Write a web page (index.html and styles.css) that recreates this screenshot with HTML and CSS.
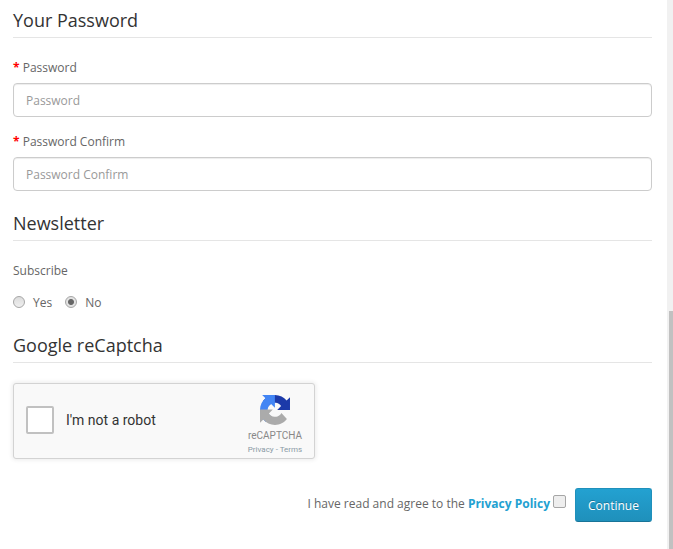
FILE: index.html
```html
<!DOCTYPE html>
<html lang="en">
<head>
    <meta charset="UTF-8">
    <title>Register</title>
    <link rel="stylesheet" href="styles.css">
</head>
<body>
    <div class="page">
        <form class="content">
            <fieldset class="group">
                <legend class="legend">Your Password</legend>
                <div class="field">
                    <label class="label"><span class="req">*</span> Password</label>
                    <input class="input" type="text" placeholder="Password">
                </div>
                <div class="field">
                    <label class="label"><span class="req">*</span> Password Confirm</label>
                    <input class="input" type="text" placeholder="Password Confirm">
                </div>
            </fieldset>
            <fieldset class="group">
                <legend class="legend">Newsletter</legend>
                <div class="label subscribe">Subscribe</div>
                <div class="radios">
                    <label class="radio"><span class="dot"></span>Yes</label>
                    <label class="radio"><span class="dot on"></span>No</label>
                </div>
            </fieldset>
            <fieldset class="group">
                <legend class="legend">Google reCaptcha</legend>
                <div class="captcha">
                    <span class="tick"></span>
                    <span class="robot">I'm not a robot</span>
                    <div class="brand">
                        <svg class="logo" width="30" height="30" viewBox="0 0 64 64">
                            <path fill="#1c3aa9" d="M64 31.955l-.033-1.37V4.687l-7.16 7.16C50.948 4.674 42.033.093 32.05.093c-10.4 0-19.622 4.96-25.458 12.64l11.736 11.86a15.55 15.55 0 0 1 4.754-5.334c2.05-1.6 4.952-2.906 8.968-2.906.485 0 .86.057 1.135.163 4.976.393 9.288 3.14 11.828 7.124l-8.307 8.307c10.522-.04 22.41-.066 27.295.005"/>
                            <path fill="#4285f4" d="M31.862.001l-1.37.033H4.594l7.16 7.16C4.58 13.05 0 21.967 0 31.95c0 10.4 4.96 19.622 12.64 25.458L24.5 45.672a15.55 15.55 0 0 1-5.334-4.754c-1.6-2.05-2.906-4.952-2.906-8.968 0-.485.057-.86.163-1.135.393-4.976 3.14-9.288 7.124-11.828l8.307 8.307c-.04-10.522-.066-22.41.005-27.295"/>
                            <path fill="#ababab" d="M.002 31.953l.033 1.37v25.898l7.16-7.16c5.86 7.173 14.775 11.754 24.76 11.754 10.4 0 19.622-4.96 25.458-12.64L45.677 38.3a15.55 15.55 0 0 1-4.754 5.334c-2.05 1.6-4.952 2.906-8.968 2.906-.485 0-.86-.057-1.135-.163-4.976-.393-9.288-3.14-11.828-7.124l8.307-8.307c-10.522.04-22.41.066-27.295-.005"/>
                        </svg>
                        <div class="brand-name">reCAPTCHA</div>
                        <div class="brand-links">Privacy - Terms</div>
                    </div>
                </div>
            </fieldset>
            <div class="buttons">
                <div class="agree">I have read and agree to the <a class="agree-link" href="#">Privacy Policy</a></div>
                <span class="check"></span>
                <button class="btn" type="button">Continue</button>
            </div>
        </form>
        <div class="scrollbar"><div class="thumb"></div></div>
    </div>
</body>
</html>
```

FILE: styles.css
```css
*{
    padding: 0;
    margin: 0;
    box-sizing: border-box;
}
body
{
    overflow: hidden;
    background: #fff;
    font-family: "Open Sans", sans-serif;
    font-size: 12px;
    color: #666;
}
.page
{
    display: flex;
    height: 549px;
}
.content
{
    flex: 1;
    padding: 8px 15px 0 13px;
}
.group
{
    border: none;
}
.legend
{
    display: block;
    width: 100%;
    height: 30px;
    font-size: 18px;
    line-height: 24px;
    color: #333;
    border-bottom: 1px solid #e5e5e5;
}
.field
{
    margin-top: 21px;
}
.field + .field
{
    margin-top: 16px;
}
.label
{
    display: block;
    height: 18px;
    line-height: 18px;
    margin-bottom: 6px;
}
.req
{
    color: #f00;
    font-weight: bold;
}
.input
{
    display: block;
    width: 100%;
    height: 34px;
    padding: 0 12px;
    font-family: inherit;
    font-size: 12px;
    color: #555;
    border: 1px solid #ccc;
    border-radius: 4px;
    box-shadow: inset 0 1px 1px rgba(0,0,0,.075);
}
.input::placeholder
{
    color: #999;
}
.group:nth-child(2)
{
    margin-top: 20px;
}
.group:nth-child(3)
{
    margin-top: 21px;
}
.subscribe
{
    margin-top: 21px;
    margin-bottom: 12px;
}
.radios
{
    display: flex;
    gap: 13px;
    height: 20px;
    align-items: center;
}
.radio
{
    display: flex;
    align-items: center;
    gap: 8px;
}
.dot
{
    display: block;
    width: 12px;
    height: 12px;
    border-radius: 50%;
    border: 1px solid #a6a6a6;
    background: linear-gradient(#dcdcdc, #efefef);
}
.dot.on
{
    background: radial-gradient(circle, #666 0, #666 2.500px, #e2e2e2 3.500px);
}
.captcha
{
    display: flex;
    align-items: center;
    width: 302px;
    height: 76px;
    margin-top: 20px;
    padding: 0 0 2px 12px;
    background: #f9f9f9;
    border: 1px solid #d3d3d3;
    border-radius: 3px;
    box-shadow: 0 0 4px 1px rgba(0,0,0,.08);
}
.tick
{
    width: 28px;
    height: 28px;
    background: #fff;
    border: 2px solid #c1c1c1;
    border-radius: 2px;
}
.robot
{
    margin-left: 12px;
    flex: 1;
    font-family: Roboto, sans-serif;
    font-size: 14px;
    color: #333;
}
.brand
{
    align-self: flex-start;
    width: 70px;
    margin-right: 4px;
    padding-top: 11px;
    text-align: center;
    font-family: Roboto, sans-serif;
    color: #888;
}
.logo
{
    display: block;
    margin: 0 auto 4px;
}
.brand-name
{
    font-size: 10px;
    line-height: 13px;
}
.brand-links
{
    margin-top: 3px;
    font-size: 8px;
    line-height: 10px;
    color: #8a9aa5;
}
.buttons
{
    display: flex;
    justify-content: flex-end;
    align-items: flex-start;
    margin-top: 29px;
}
.agree
{
    margin-top: 7px;
    line-height: 18px;
}
.agree-link
{
    color: #23a1d1;
    font-weight: bold;
    text-decoration: none;
}
.check
{
    width: 13px;
    height: 13px;
    margin: 7px 9px 0 3px;
    background: #eee;
    border: 1px solid #a6a6a6;
    border-radius: 2px;
}
.btn
{
    width: 77px;
    height: 34px;
    font-family: inherit;
    font-size: 12px;
    color: #fff;
    background: linear-gradient(#23a1d1, #1f90bb);
    border: 1px solid #1f90bb;
    border-bottom-color: #187498;
    border-radius: 3px;
    text-shadow: 0 -1px 0 rgba(0,0,0,.25);
}
.scrollbar
{
    display: flex;
    flex-direction: column;
    justify-content: flex-end;
    width: 6px;
    background: #f1f1f1;
}
.thumb
{
    height: 238px;
    margin-left: 2px;
    background: #c1c1c1;
}
```
